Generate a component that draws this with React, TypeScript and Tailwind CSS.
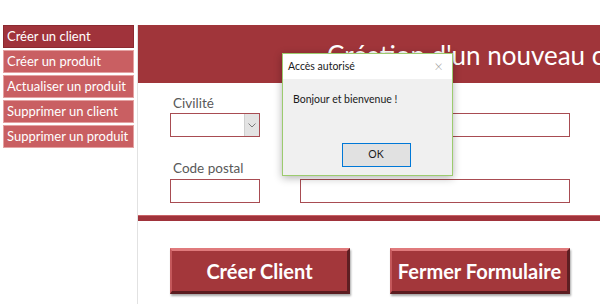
import React from 'react';

const menu = [
  { label: 'Créer un client', active: true },
  { label: 'Créer un produit' },
  { label: 'Actualiser un produit' },
  { label: 'Supprimer un client' },
  { label: 'Supprimer un produit' },
];

const Field: React.FC<{ className?: string }> = ({ className = '' }) => (
  <div className={`h-[24px] shrink-0 border border-[#a84c52] bg-white ${className}`} />
);

const BevelButton: React.FC<{ label: string }> = ({ label }) => (
  <button className="flex h-[46px] w-[180px] items-center justify-center whitespace-nowrap border-t-[3px] border-l-2 border-r-[3px] border-b-[3px] border-t-[#e07a7c] border-l-[#c4585b] border-r-[#5e1e22] border-b-[#5a1c20] bg-[#a3373b] pb-[1px] font-['Lato',sans-serif] text-[20px] font-bold text-white shadow-[1px_2px_2px_rgba(0,0,0,0.35)]">
    {label}
  </button>
);

export default function App() {
  return (
    <div className="relative h-[304px] w-[600px] overflow-hidden bg-white font-['Lato',sans-serif]">
      <div className="flex pt-[25px]">
        <nav className="ml-[3px] flex w-[131px] shrink-0 flex-col gap-[2px]">
          {menu.map((m) => (
            <div
              key={m.label}
              className={`flex h-[23px] items-center whitespace-nowrap border px-[3px] text-[13px] text-white ${
                m.active ? 'border-[#8c2a31] bg-[#a0333b]' : 'border-[#e4a2a2] bg-[#c95f62]'
              }`}
            >
              {m.label}
            </div>
          ))}
        </nav>

        <main className="ml-[3px] flex h-[279px] min-w-0 flex-1 flex-col border-l border-[#e2e2e2]">
          <header className="h-[58px] overflow-hidden whitespace-nowrap bg-[#a0353a] pl-[189px] pt-[13px] font-['Lato',sans-serif] text-[26px] leading-[34px] text-white">
            <span>Création d'un nouveau client</span>
          </header>

          <div className="flex flex-col pl-[32px] pt-[12px]">
            <div className="flex items-end gap-[40px]">
              <div className="flex shrink-0 flex-col">
                <span className="pl-[3px] text-[13.5px] leading-[17px] text-[#595959]">Civilité</span>
                <div className="mt-[1px] flex h-[24px] w-[90px] border border-[#a84c52] bg-white">
                  <div className="flex-1" />
                  <div className="flex w-[15px] items-center justify-center border-l border-[#cfcfcf] bg-[#e3e3e3]">
                    <svg width="8" height="5" viewBox="0 0 8 5" fill="none" stroke="#7a7a7a" strokeWidth="1">
                      <path d="M0.5 0.5 L4 4 L7.5 0.5" />
                    </svg>
                  </div>
                </div>
              </div>
              <Field className="w-[270px]" />
            </div>

            <div className="mt-[23px] flex items-end gap-[40px]">
              <div className="flex shrink-0 flex-col">
                <span className="pl-[3px] text-[13.5px] leading-[17px] text-[#595959]">Code postal</span>
                <Field className="mt-[2px] w-[90px]" />
              </div>
              <Field className="w-[270px]" />
            </div>
          </div>

          <div className="mt-[12px] h-[6px] border-t border-[#c86266] bg-[#a0333b]" />

          <div className="mt-[27px] flex gap-[40px] pl-[32px]">
            <BevelButton label="Créer Client" />
            <BevelButton label="Fermer Formulaire" />
          </div>
        </main>
      </div>

      <div className="absolute left-[282px] top-[53px] flex h-[123px] w-[171px] flex-col border border-[#9ccb6e] bg-[#f0f0f0] font-['Lato',sans-serif] shadow-[0_2px_8px_rgba(0,0,0,0.3)]">
        <div className="flex h-[25px] items-center justify-between bg-white pl-[5px] pr-[9px] text-[10.5px] text-[#1a1a1a]">
          <span>Accès autorisé</span>
          <span className="text-[15px] font-light text-[#9a9a9a]">×</span>
        </div>
        <div className="pl-[10px] pt-[13px] text-[10.5px] text-[#1a1a1a]">Bonjour et bienvenue !</div>
        <div className="mt-auto mb-[8px] flex justify-center">
          <button className="ml-[17px] h-[24px] w-[69px] border border-[#0078d7] bg-[#e1e1e1] text-[10.5px] text-[#1a1a1a]">
            OK
          </button>
        </div>
      </div>
    </div>
  );
}
